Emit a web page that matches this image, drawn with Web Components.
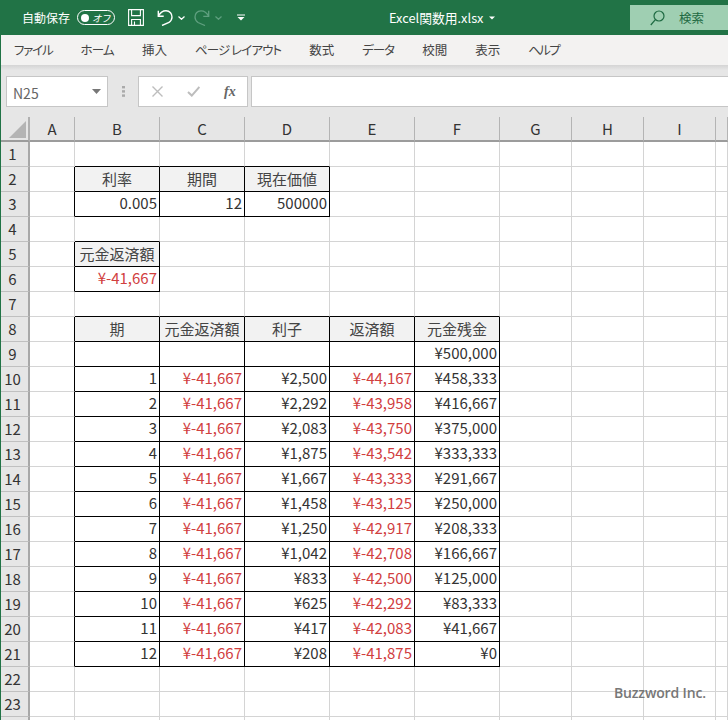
<!DOCTYPE html>
<html lang="ja">
<head>
<meta charset="utf-8">
<title>Excel</title>
<style>
html,body{margin:0;padding:0;width:728px;height:720px;overflow:hidden;background:#fff;}
body{font-family:"Noto Sans CJK JP","Noto Sans",sans-serif;}
</style>
</head>
<body>
<excel-titlebar></excel-titlebar>
<excel-ribbon>
  <ribbon-tab style="letter-spacing:-1.2px">ファイル</ribbon-tab>
  <ribbon-tab style="letter-spacing:-.8px">ホーム</ribbon-tab>
  <ribbon-tab>挿入</ribbon-tab>
  <ribbon-tab style="letter-spacing:-.9px">ページ レイアウト</ribbon-tab>
  <ribbon-tab>数式</ribbon-tab>
  <ribbon-tab style="letter-spacing:-1px">データ</ribbon-tab>
  <ribbon-tab>校閲</ribbon-tab>
  <ribbon-tab>表示</ribbon-tab>
  <ribbon-tab style="letter-spacing:-1.6px">ヘルプ</ribbon-tab>
</excel-ribbon>
<excel-formulabar></excel-formulabar>
<excel-sheet></excel-sheet>
<script>
// タイトルバー
class ExcelTitlebar extends HTMLElement {
  constructor() {
    super();
    const shadow = this.attachShadow({ mode: 'open' });
    shadow.innerHTML = `
      <style>
:host{display:flex;align-items:center;height:35px;background:#217346;color:#fff;font-size:12px;position:relative;}
.autosave{margin-left:22px;width:48px;white-space:nowrap;}
.toggle{margin-left:7px;box-sizing:border-box;width:38px;height:15px;border:1.3px solid #fff;border-radius:8px;display:flex;align-items:center;padding:0 3px;justify-content:space-between;}
.knob{width:8px;height:8px;border-radius:50%;background:#fff;}
.off{font-size:9.5px;font-style:italic;line-height:12px;margin-right:1px;letter-spacing:-.5px;}
svg{display:block;flex:none;}
.save{margin-left:13px;}
.undo{margin-left:13px;}
.c1{margin-left:5px;}
.redo{margin-left:9px;}
.c2{margin-left:5px;}
.qat{margin-left:15px;}
.name{margin-left:144px;width:94px;white-space:nowrap;font-size:12.8px;font-feature-settings:"palt";}
.caret{margin-left:6px;}
.search{margin-left:auto;align-self:flex-start;margin-top:5px;width:98px;height:25px;background:#9fcfb2;color:#1e6a42;display:flex;align-items:center;font-size:12.5px;}
.search svg{margin-left:20px;}
.search span{margin-left:14px;}
      </style>
      <span class="autosave">自動保存</span>
      <span class="toggle"><span class="knob"></span><span class="off">オフ</span></span>
      <svg class="save" width="16" height="17" viewBox="0 0 16 17" fill="none" stroke="#fff" stroke-width="1.1"><path d="M.6.6H15.4V16.4H.6Z"/><path d="M3.6.6V6.6H12.4V.6"/><path d="M3.6 16.4V10.5H12.4V16.4"/><path d="M6.5 16.4V12.5"/></svg>
      <svg class="undo" width="16" height="17" viewBox="0 0 16 17" fill="none" stroke="#fff" stroke-width="1.4"><path d="M1.3 7.3C3 4 6 1.8 9 1.8 13 1.8 15 5 15 8 15 10 14 12 12 13.5L5 16.5"/><path d="M1.3 1.7V7.3H6.7"/></svg>
      <svg class="c1" width="7" height="4" viewBox="0 0 7 4" fill="none" stroke="#fff" stroke-width="1.2"><path d="M.5.5 3.5 3.3 6.5.5"/></svg>
      <svg class="redo" width="16" height="17" viewBox="0 0 16 17" fill="none" stroke="#5f9f7f" stroke-width="1.3"><path d="M14.7 7.3C13 4 10 1.8 7 1.8 3 1.8 1 5 1 8 1 10 2 12 4 13.5L11 16.5"/><path d="M14.7 1.7V7.3H9.3"/></svg>
      <svg class="c2" width="7" height="4" viewBox="0 0 7 4" fill="none" stroke="#5f9f7f" stroke-width="1.2"><path d="M.5.5 3.5 3.3 6.5.5"/></svg>
      <svg class="qat" width="8" height="7" viewBox="0 0 8 7"><path d="M0 .5H8V1.5H0Z" fill="#fff"/><path d="M.5 3H7.5L4 6.6Z" fill="#fff"/></svg>
      <span class="name">Excel関数用.xlsx</span>
      <svg class="caret" width="6" height="4" viewBox="0 0 6 4"><path d="M0 .5H6L3 3.6Z" fill="#fff"/></svg>
      <div class="search">
        <svg width="15" height="16" viewBox="0 0 15 16" fill="none" stroke="#1e6a42" stroke-width="1.2"><circle cx="9" cy="6" r="5"/><path d="M5.4 9.6 .8 15"/></svg>
        <span>検索</span>
      </div>
    `;
  }
}
customElements.define('excel-titlebar', ExcelTitlebar);

class RibbonTab extends HTMLElement {
  constructor() {
    super();
    const shadow = this.attachShadow({ mode: 'open' });
    shadow.innerHTML = `
      <style>
:host{display:block;white-space:nowrap;}
      </style>
      <slot></slot>
    `;
  }
}
customElements.define('ribbon-tab', RibbonTab);

class ExcelRibbon extends HTMLElement {
  constructor() {
    super();
    const shadow = this.attachShadow({ mode: 'open' });
    shadow.innerHTML = `
      <style>
:host{display:flex;align-items:center;gap:28px;box-sizing:border-box;height:30px;padding:0 0 2px 13px;background:#f3f2f1;border-left:1px solid #217346;color:#444;font-size:12.5px;font-feature-settings:"palt";}
      </style>
      <slot></slot>
    `;
  }
}
customElements.define('excel-ribbon', ExcelRibbon);

// 数式バー
class ExcelFormulabar extends HTMLElement {
  constructor() {
    super();
    const shadow = this.attachShadow({ mode: 'open' });
    shadow.innerHTML = `
      <style>
:host{display:flex;box-sizing:border-box;height:52px;padding:11px 0 10px 5px;background:linear-gradient(#d4d4d4,#e6e6e6 5px);border-left:1px solid #217346;}
.box{box-sizing:border-box;height:31px;background:#fff;border:1px solid #c6c6c6;display:flex;align-items:center;}
.namebox{width:102px;padding:0 6px;justify-content:space-between;color:#666;font-size:14px;}
.namebox span{padding-top:3px;}
.dots{width:30px;display:flex;align-items:center;justify-content:center;}
.fxbox{width:110px;color:#bdbdbd;}
.fxbox svg{flex:none;}
.fx{font:italic bold 14px "Liberation Serif",serif;color:#666;}
.input{flex:1;margin-left:3px;border-right:none;}
      </style>
      <div class="box namebox"><span>N25</span><svg width="9" height="5" viewBox="0 0 9 5"><path d="M0 0H9L4.5 5Z" fill="#777"/></svg></div>
      <div class="dots"><svg width="3" height="11" viewBox="0 0 3 11" fill="#aaa"><rect width="3" height="2.4"/><rect y="4.2" width="3" height="2.4"/><rect y="8.4" width="3" height="2.4"/></svg></div>
      <div class="box fxbox">
        <svg style="margin-left:13px" width="11" height="11" viewBox="0 0 11 11" fill="none" stroke="#bdbdbd" stroke-width="1.4"><path d="M.5.5 10.5 10.5M10.5.5 .5 10.5"/></svg>
        <svg style="margin-left:24px" width="13" height="11" viewBox="0 0 13 11" fill="none" stroke="#bdbdbd" stroke-width="2"><path d="M1 6 4.8 9.6 12.4 1"/></svg>
        <span class="fx" style="margin-left:24px">fx</span>
      </div>
      <div class="box input"></div>
    `;
  }
}
customElements.define('excel-formulabar', ExcelFormulabar);

// シート本体
const COLS = ['A','B','C','D','E','F','G','H','I',''];
const WIDTHS = [45,85,85,85,85,85,72,72,72,12];
const RED = 'r';
const sheetData = {
  B2:'利率', C2:'期間', D2:'現在価値',
  B3:'0.005', C3:'12', D3:'500000',
  B5:'元金返済額', B6:'¥-41,667'+RED,
  B8:'期', C8:'元金返済額', D8:'利子', E8:'返済額', F8:'元金残金',
  F9:'¥500,000'
};
const schedule = [
  ['¥2,500','¥-44,167','¥458,333'],
  ['¥2,292','¥-43,958','¥416,667'],
  ['¥2,083','¥-43,750','¥375,000'],
  ['¥1,875','¥-43,542','¥333,333'],
  ['¥1,667','¥-43,333','¥291,667'],
  ['¥1,458','¥-43,125','¥250,000'],
  ['¥1,250','¥-42,917','¥208,333'],
  ['¥1,042','¥-42,708','¥166,667'],
  ['¥833','¥-42,500','¥125,000'],
  ['¥625','¥-42,292','¥83,333'],
  ['¥417','¥-42,083','¥41,667'],
  ['¥208','¥-41,875','¥0']
];
schedule.forEach((r, i) => {
  const row = 10 + i;
  sheetData['B'+row] = String(i + 1);
  sheetData['C'+row] = '¥-41,667'+RED;
  sheetData['D'+row] = r[0];
  sheetData['E'+row] = r[1]+RED;
  sheetData['F'+row] = r[2];
});
const RANGES = [[1,2,3,3],[1,5,1,6],[1,8,5,21]]; // col0,row0,col1,row1
const HEAD_ROWS = [2,5,8];
const inTable = (c, r) => RANGES.some(t => c >= t[0] && c <= t[2] && r >= t[1] && r <= t[3]);

class ExcelSheet extends HTMLElement {
  constructor() {
    super();
    const shadow = this.attachShadow({ mode: 'open' });
    let cells = '<div class="corner"><svg width="17" height="17" viewBox="0 0 17 17"><path d="M17 0V17H0Z" fill="#b4b4b4"/></svg></div>';
    COLS.forEach(c => { cells += `<div class="colh">${c}</div>`; });
    for (let r = 1; r <= 24; r++) {
      // 24行目は上端しか見えないので番号は出さない
      cells += `<div class="rowh">${r < 24 ? r : ''}</div>`;
      COLS.forEach((c, i) => {
        const cls = ['cell'];
        if (inTable(i, r) || inTable(i + 1, r)) cls.push('br');
        if (inTable(i, r) || inTable(i, r + 1)) cls.push('bb');
        let v = sheetData[c + r] || '';
        if (v.endsWith(RED)) { v = v.slice(0, -1); cls.push('red'); }
        if (inTable(i, r) && HEAD_ROWS.includes(r)) cls.push('head');
        cells += `<div class="${cls.join(' ')}">${v}</div>`;
      });
    }
    shadow.innerHTML = `
      <style>
:host{display:block;height:603px;overflow:hidden;position:relative;border-left:1px solid #217346;background:#fff;}
.grid{display:grid;grid-template-columns:29px ${WIDTHS.map(w => w + 'px').join(' ')};grid-auto-rows:25px;font-size:15px;color:#333;}
.grid>div{box-sizing:border-box;line-height:23px;white-space:nowrap;overflow:hidden;}
.corner{background:#e6e6e6;border-right:2px solid #b0b0b0;border-bottom:2px solid #9c9c9c;display:flex;justify-content:flex-end;align-items:flex-end;padding:0 2px 2px 0;}
.colh{background:#e6e6e6;border-right:1px solid #b4b4b4;border-bottom:2px solid #9c9c9c;text-align:center;color:#333;}
.rowh{background:#e6e6e6;border-right:2px solid #a8a8a8;border-bottom:1px solid #c0c0c0;text-align:center;padding-right:4px;color:#333;}
.grid>.cell{border-right:1px solid #d4d4d4;border-bottom:1px solid #d4d4d4;text-align:right;padding-right:2px;line-height:21px;font-feature-settings:"tnum";}
.grid>.cell.br{border-right-color:#000;}
.grid>.cell.bb{border-bottom-color:#000;}
.grid>.cell.red{color:#d1403f;}
.grid>.cell.head{background:#f2f2f2;text-align:center;padding:0;line-height:23px;color:#444;}
.mark{position:absolute;left:613px;top:566px;font:600 14px/20px "Open Sans",sans-serif;color:#777;letter-spacing:-.15px;}
      </style>
      <div class="grid">${cells}</div>
      <div class="mark">Buzzword Inc.</div>
    `;
  }
}
customElements.define('excel-sheet', ExcelSheet);
</script>
</body>
</html>
